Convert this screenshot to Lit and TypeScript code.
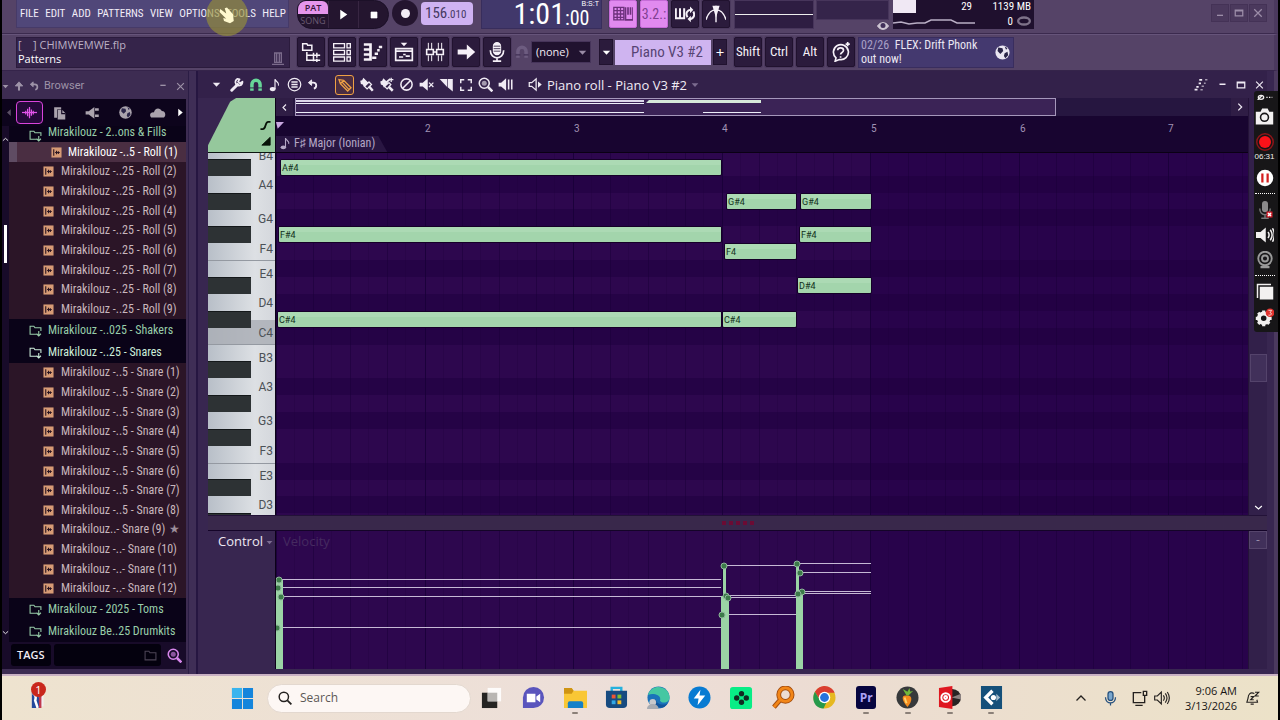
import { LitElement, html, svg, css } from "lit";
import { customElement } from "lit/decorators.js";

const ico = (body: unknown, w = 24, h = w, vw = 24, vh = vw, cls = "") =>
  html`<svg class=${cls} width=${w} height=${h} viewBox="0 0 ${vw} ${vh}" fill="none" stroke="currentColor" stroke-width="2" aria-hidden="true">${body}</svg>`;

const I = {
  tri: svg`<path d="M2 7h20L12 18z" fill="currentColor" stroke="none"/>`,
  play: svg`<path d="M6 3l13 9-13 9z" fill="currentColor" stroke="none"/>`,
  left: svg`<path d="M16 4L8 12l8 8" stroke-width="3"/>`,
  right: svg`<path d="M8 4l8 8-8 8" stroke-width="3"/>`,
  down: svg`<path d="M3 8l9 8 9-8" stroke-width="3"/>`,
  up: svg`<path d="M3 16l9-8 9 8" stroke-width="3"/>`,
  min: svg`<path d="M4 10h16" stroke-width="4"/>`,
  max: svg`<path d="M3 5h18v14H3zM3 7h18" stroke-width="3"/>`,
  close: svg`<path d="M3 3l18 18M21 3L3 21" stroke-width="3"/>`,
  undo: svg`<path d="M10 2L3 8l7 6V2z" fill="currentColor"/><path d="M8 8h6c8 0 8 11 1 13" stroke-width="4"/>`,
  arrowUp: svg`<path d="M12 23V6" stroke-width="5"/><path d="M3 12L12 2l9 10z" fill="currentColor"/>`,
  wrench: svg`<path d="M3 21L13 11" stroke-width="5" stroke-linecap="round"/><path d="M21 5a6 6 0 1 1-6-4M22 6l-5 3-3-3 3-5" stroke-width="3"/>`,
  magnet: svg`<path d="M5 22V11a7 7 0 0 1 14 0v11" stroke-width="6"/><path d="M1 17h8M15 17h8" stroke="#2e1d42" stroke-width="1.5"/>`,
  note: svg`<path d="M12 19V2c1 5 8 5 6 11" /><ellipse cx="8" cy="19" rx="5" ry="3.5" fill="currentColor" stroke="none"/>`,
  lines: svg`<circle cx="12" cy="12" r="10"/><path d="M7 8h10M7 12h10M7 16h10" stroke-width="2.3"/>`,
  pencil: svg`<path d="M3 4l7 1 11 11-5 5L5 10zM10 5L5 10M8 8l10 11"/>`,
  brush: svg`<path d="M2 6l3-1 2-4 8 8-7 7-2-4-3-1z" fill="currentColor" stroke="none"/><path d="M16 8l4 4-7 7-4-4z"/><path d="M16 15l6 7" stroke-width="4"/>`,
  brushPlus: svg`<path d="M2 7l3-1 2-4 8 8-7 7-2-4-3-1z" fill="currentColor" stroke="none"/><path d="M16 9l3 3-6 7-4-4z"/><path d="M16 16l6 6" stroke-width="4"/><path d="M10 10l8-7" stroke-width="3"/><path d="M16 4h7M19.500 1v7"/>`,
  no: svg`<circle cx="12" cy="12" r="9" stroke-width="2.5"/><path d="M6 18L18 6" stroke-width="2.5"/>`,
  mute: svg`<path d="M1 9h5l8-7v20l-8-7H1z" fill="currentColor" stroke="none"/><path d="M16 9l7 7M23 9l-7 7"/>`,
  slice: svg`<path d="M1 3h12v13z" fill="currentColor" stroke="none"/><path d="M15 4h6v17l-6-5z" fill="currentColor"/>`,
  select: svg`<path d="M9 3H3v6M15 3h6v6M3 15v6h6M21 15v6h-6" stroke-width="2.5"/>`,
  zoom: svg`<circle cx="10" cy="10" r="8" stroke-width="2.5"/><circle cx="10" cy="10" r="4" fill="currentColor" opacity=".6" stroke="none"/><path d="M16 16l7 7" stroke-width="4"/>`,
  playback: svg`<path d="M1 9h4l8-7v20l-8-7H1z" fill="currentColor" stroke="none"/><path d="M17 4v16M22 4v16" stroke-width="2.5"/>`,
  speaker: svg`<path d="M2 9h4l7-6v18l-7-6H2z"/><path d="M16 7l6 5-6 5z" fill="currentColor" stroke="none"/>`,
  wave: svg`<path d="M0 12h24" stroke-width="2"/><path d="M6 9v6M9 6v12M12 3v18M15 7v10M18 9v6" stroke-width="2"/>`,
  pages: svg`<path d="M2 2h12v4H7v14H2z" fill="currentColor" stroke="none"/><path d="M8 7h8l5 5v11H8z" fill="currentColor" stroke="none"/><path d="M15 7v6h6" stroke="#120822"/>`,
  plug: svg`<path d="M1 10h5l9-7v19l-9-7H1zM16 5h6v4h-6zM16 15h6v4h-6z" fill="currentColor" stroke="none"/>`,
  globe: svg`<circle cx="12" cy="12" r="10" fill="currentColor" stroke="none"/><path d="M6 5l6 1 1 4-4 4-4-4zM15 13l4-2 1 5-4 4-2-3zM15 3l4 3-2 2z" fill="#2a2548" stroke="none"/>`,
  cloud: svg`<path d="M3 19c-4-5 1-8 4-7 1-7 9-7 11-2 6 0 6 7 3 9z" fill="currentColor" stroke="none"/>`,
  folder: svg`<path d="M14 19H2V4h7l2 3h11v6M18 13v9M14 18l4 4 4-4" stroke-width="2"/>`,
  folder2: svg`<path d="M2 4h7l2 3h11v13H2z"/>`,
  browser: svg`<path d="M2 2h5l1 2h5v6H2zM7 12v10h8M7 16h8M15 13v6M19 13v6M15 16h8M15 19v4M19 20v4M15 22h8" stroke-width="1.8"/>`,
  rack: svg`<path d="M2 2h13v5H2zM2 10h13v5H2zM2 18h13v5H2zM18 2h4v5h-4zM18 10h4v5h-4zM18 18h4v5h-4z" stroke-width="1.6"/>`,
  roll: svg`<path d="M1 3h8v18H1M1 9h8M1 15h8" stroke-width="3.2"/><path d="M11 19h5M14 14h4M17 10h3M19 6h4" stroke-width="3"/>`,
  playlist: svg`<path d="M2 8h20v14H2z M2 11h20"/><path d="M6 18h5M11 15h3M14 17h5" stroke-width="2"/><path d="M8 1h8l-4 4z" fill="currentColor" stroke="none"/>`,
  mixer: svg`<path d="M4 1v8M8 1v8M16 1v8M20 1v8M4 16v7M8 16v7M16 16v7M20 16v7" stroke-width="1.2"/><path d="M2 9h8v6H2zM14 9h8v6h-8zM10 12h4" stroke-width="1.9"/>`,
  arrow: svg`<path d="M2 12h12" stroke-width="6"/><path d="M13 3l10 9-10 9z" fill="currentColor" stroke="none"/>`,
  mic: svg`<rect x="8" y="1" width="8" height="14" rx="4" fill="currentColor"/><path d="M8 5h8M8 8h8M8 11h8" stroke="#2b1b3c" stroke-width="1"/><path d="M4 10c0 12 16 12 16 0M12 18v5M7 23h10"/>`,
  help: svg`<path d="M6 19l-1 4 5-2a9 9 0 1 0-4-2zM8 10c0-4 7-4 7 0 0 3-3.500 2-3.500 5M11.500 17v2"/><path d="M20 0v5M17.500 2.500h5"/>`,
  typing: svg`<path d="M1 4h12v15H1zM1 8h12M1 12h12M1 16h12M5 4v15M9 4v15" stroke-width="1.6"/><path d="M15 4v15h9V4M18 4v9M21 4v9" stroke-width="2"/>`,
  loop: svg`<path d="M1 5v12h10V5M6 5v12" stroke-width="2.4"/><path d="M15 16c-3-5 0-9 4-9M17 18c6 0 7-5 5-9" stroke-width="2.4"/><path d="M18 3l4 4-4 4zM19 14l-4 4 4 4z" fill="currentColor" stroke="none"/>`,
  curve: svg`<path d="M0 19C3 9 8 7 12 7s9 2 12 12M12 2v20" stroke-width="1.700"/><path d="M9 3h6l-3 10z" fill="currentColor"/>`,
  sample: svg`<rect x="1" y="1" width="22" height="22" fill="#d79b75" stroke="none"/><path d="M6 5v14M9 12h10M12 8v8M16 9v6" stroke="#2a1420" stroke-width="2.400"/>`,
  hat: svg`<path d="M7 3h10v14H7zM3 20h18M10 4v13M14 4v13"/>`,
  eye: svg`<path d="M1 12c5-9 17-9 22 0-5 9-17 9-22 0z" fill="currentColor"/><circle cx="12" cy="11" r="5" fill="#41305a" stroke="none"/>`,
  ghost: svg`<path d="M1 20h5M4 15h4M8 9h4M9 3h5" stroke-width="3"/><path d="M11 20h4M13 14h4M17 9h3M19 3h4" stroke-width="2.5" opacity=".6"/>`,
};

const T = {
  widgets: svg`<path d="M7 7h14v15H7z" fill="#f2eef0" stroke="none"/><path d="M7 4c3-1 6-1 7 3l2 6 2 11H7z" fill="#23499b" stroke="none"/><path d="M8 7c4 0 4 5 3 8l3 9" stroke="#fff" stroke-width="3"/><path d="M17 9v15" stroke="#c0374d" stroke-width="3"/>`,
  win: svg`<path d="M1 1h10.500v10.500H1zM12.500 1H23v10.500H12.500zM1 12.500h10.500V23H1zM12.500 12.500H23V23H12.500z" fill="#1485dc" stroke="none"/><path d="M1 1h10.500v10.500H1z" fill="#39b4ee" stroke="none"/>`,
  task: svg`<path d="M2 7h16v16H2z" fill="#252422" stroke="none"/><path d="M8 2h14v14H8z" fill="#fdfbfa" stroke="none"/><path d="M8 7h10v9H8z" fill="#b9b6b3" stroke="none"/>`,
  chat: svg`<path d="M1 23V12a11 11 0 1 1 11 11z" fill="#5a55bd" stroke="none"/><path d="M5 8h9v9H5zM15 11l4-3v9l-4-3z" fill="#fff" stroke="none"/>`,
  files: svg`<path d="M0 2h8l2 3h14v18H0z" fill="#f9c735" stroke="none"/><path d="M0 2h8l2 3-2 3H0z" fill="#cf9413" stroke="none"/><path d="M4 23v-5q0-2 2-2h12q2 0 2 2v5z" fill="#1380c8" stroke="none"/>`,
  store: svg`<path d="M7 6V2h10v4" stroke="#25b1dd" stroke-width="2.500"/><path d="M1 5h22v14q0 4-4 4H5q-4 0-4-4z" fill="#174b80" stroke="none"/><path d="M7 9h4v4H7z" fill="#ee5533" stroke="none"/><path d="M13 9h4v4h-4z" fill="#82bd31" stroke="none"/><path d="M7 15h4v4H7z" fill="#33a8e5" stroke="none"/><path d="M13 15h4v4h-4z" fill="#f8bb28" stroke="none"/>`,
  edge: svg`<circle cx="12" cy="12" r="11.500" fill="#1a73ba" stroke="none"/><path d="M1 9C5-3 22-1 23.500 11c1 7-8 8-10 4 2-5-6-8-12-6z" fill="#45c7a2" stroke="none"/><path d="M9 13c0 6 8 8 13 5l-4 4C10 25 6 18 9 13z" fill="#11549c" stroke="none"/><circle cx="6" cy="17" r="3.500" fill="#c7c8cc" stroke="none"/><path d="M0 24c0-7 12-7 12 0z" fill="#a8abb2" stroke="none"/>`,
  bolt: svg`<circle cx="12" cy="12" r="11.500" fill="#087bd2" stroke="none"/><path d="M13 4L6 13h5l-1 7 8-10h-6z" fill="#fff" stroke="none"/>`,
  green: svg`<rect x="0" y="1" width="23" height="23" rx="3" fill="#08ed86" stroke="none"/><g fill="#122b22" stroke="none"><circle cx="12" cy="8" r="2.800"/><circle cx="12" cy="17" r="2.800"/><circle cx="7" cy="12.500" r="2.800"/><circle cx="17" cy="12.500" r="2.800"/></g>`,
  magnifier: svg`<circle cx="14" cy="9" r="7" stroke="#a44e10" stroke-width="5"/><path d="M9 14l-7 8" stroke="#a44e10" stroke-width="5"/><circle cx="14" cy="9" r="7" stroke="#f28618" stroke-width="3"/><path d="M9 14l-7 8" stroke="#f28618" stroke-width="3"/>`,
  chrome: svg`<circle cx="12" cy="12" r="11.500" fill="#e6b820" stroke="none"/><path d="M2 6C8-4 20 0 22.500 7H12L7 14z" fill="#da3e31" stroke="none"/><path d="M2 6l6 10 6 1-3 6.500C1 23-2 13 2 6z" fill="#26994b" stroke="none"/><circle cx="12" cy="12" r="6" fill="#fff" stroke="none"/><circle cx="12" cy="12" r="4.600" fill="#2673dc" stroke="none"/>`,
  fl: svg`<circle cx="12" cy="12" r="11.500" fill="#37393b" stroke="none"/><path d="M12 22c-7-8-6-13-1-12 6-1 7 5 1 12z" fill="#f58a1c" stroke="none"/><path d="M11 10L7 3l5 3 2-4 1 4 3-1-5 5z" fill="#71b83a" stroke="none"/><path d="M9 12l2 6" stroke="#ffd26a"/>`,
  disc: svg`<circle cx="15" cy="12" r="9" fill="#282424" stroke="none"/><path d="M14 12l10-4v6z" fill="#8b8180" stroke="none"/><path d="M1 2l14-2v24L1 22z" fill="#df1720" stroke="none"/><circle cx="8" cy="12" r="4.500" stroke="#fff"/><circle cx="8" cy="12" r="1.500" stroke="#fff"/>`,
  cubase: svg`<path d="M1 0h22v24H1z" fill="#15507a" stroke="none"/><path d="M13 5l-7 7 7 7" stroke="#fff" stroke-width="3.500"/><circle cx="14" cy="12" r="2.700" fill="#fff" stroke="none"/><path d="M17 8l4 4-4 4z" fill="#fff" stroke="none" opacity=".6"/>`,
};

/* ---------- data ---------- */
type Row = { t: string; k: "folder" | "open" | "file"; sel?: boolean; star?: boolean };
const rows: Row[] = [
  { t: "Mirakilouz -..5 - Roll (1)", k: "file", sel: true },
  ...[2, 3, 4, 5, 6, 7, 8, 9].map((n): Row => ({ t: `Mirakilouz -..25 - Roll (${n})`, k: "file" })),
  { t: "Mirakilouz -..025 - Shakers", k: "folder" },
  { t: "Mirakilouz -..25 - Snares", k: "open" },
  ...[1, 2, 3, 4, 5, 6, 7, 8].map((n): Row => ({ t: `Mirakilouz -..5 - Snare (${n})`, k: "file" })),
  { t: "Mirakilouz..- Snare (9)", k: "file", star: true },
  ...[10, 11, 12].map((n): Row => ({ t: `Mirakilouz -..- Snare (${n})`, k: "file" })),
  { t: "Mirakilouz - 2025 - Toms", k: "folder" },
  { t: "Mirakilouz Be..25 Drumkits", k: "folder" },
];

// Note name, start x, width, top y, measured inside the note grid.
const notes: [string, number, number, number][] = [
  ["A#4", 5, 440, 7], ["F#4", 3, 442, 74], ["C#4", 2, 443, 159],
  ["G#4", 451, 69, 41], ["F4", 449, 71, 91], ["C#4", 447, 73, 159],
  ["G#4", 525, 70, 41], ["F#4", 524, 71, 74], ["D#4", 522, 73, 125],
];

const SEMI = 17 - 0.13;
const NAMES = ["B", "A#", "A", "G#", "G", "F#", "F", "E", "D#", "D", "C#", "C"];
const OUT_OF_SCALE = ["A", "G", "E", "D", "C"];
const BEAT = 148.6 / 4;
const keyLabels: [string, number][] = [
  ["B4", 7], ["A4", 36], ["G4", 70], ["F4", 100], ["E4", 125], ["D4", 154], ["C4", 184],
  ["B3", 209], ["A3", 238], ["G3", 272], ["F3", 302], ["E3", 327], ["D3", 356],
];

const verticals = (h: number) => Array.from({ length: 27 }, (_, i) => {
  const x = Math.round(i * BEAT);
  return svg`<rect x=${x} y="0" width="1" height=${h} fill="#190038" opacity=${i % 4 ? 0.45 : 0.85}/>
    <rect x=${x + 18} y="0" width="1" height=${h} fill="#190038" opacity=".18"/>`;
});

const stems: { bar: [number, number, number]; end: number; pts: [number, number][] }[] = [
  { bar: [0, 7, 49], end: 445, pts: [[3, 49], [2, 57], [5, 66], [1, 97]] },
  { bar: [445, 8, 65], end: 520, pts: [[448, 35], [450, 65], [452, 67], [446, 84]] },
  { bar: [520, 7, 61], end: 595, pts: [[521, 33], [524, 42], [526, 61], [522, 63]] },
];

@customElement("app-root")
export class AppRoot extends LitElement {
  static styles = css`
    :host { display: flex; flex-direction: column; height: 100vh; box-sizing: border-box; overflow: hidden; position: relative;
      border-inline: 2px solid #000; background: #554367; color: #eee8f2;
      --narrow: "Roboto Condensed", "Roboto", sans-serif; --ui: "Open Sans", "Noto Sans", sans-serif;
      font: 12px/16px var(--ui); }
    *, *::before { box-sizing: border-box; }
    svg { display: block; flex: none; }
    button, input, select { font: inherit; color: inherit; margin: 0; padding: 0; border: 0; background: none; border-radius: 0; }
    button { display: flex; align-items: center; justify-content: center; }
    .bar { display: flex; flex: none; align-items: flex-start; padding-left: 14px; border-right: 4px solid #4b395e; white-space: nowrap; }
    .top { height: 34px; border-bottom: 1px solid #3b2a4e; }
    .second { height: 37px; align-items: center; border-top: 1px solid #66547a; border-bottom: 1px solid #35244a; padding-bottom: 1px; }
    .menu { width: 273px; height: 28px; background: #504779; border: 1px solid #463a68; border-top: 0; display: flex; justify-content: space-between; align-items: center; padding: 0 2px 0 3px;
      font: 11px/20px var(--narrow); color: #f3eef8; }
    .transport { display: flex; margin-left: 8px; width: 92px; height: 29px; border-radius: 10px 16px 16px 16px; background: #24152f; overflow: hidden; border: 1px solid #1c1028; }
    .transport button { flex: 1; border-left: 1px solid #382642; color: #fff; }
    .modes { width: 30px; text-align: center; font: 9px/13px var(--ui); }
    .pat { background: #e696ec; color: #38163d; border-radius: 6px 6px 0 0; font-weight: 600; }
    .song { color: #695a72; }
    .rec { width: 26px; height: 26px; border-radius: 50%; background: #24152f; margin-left: 3px; }
    .rec i { width: 9px; height: 9px; border-radius: 50%; background: #f3edf6; }
    .tempo { margin: 2px 0 0 3px; width: 52px; height: 23px; border-radius: 4px; background: #cfb2f2; color: #463963; font: 15px/23px var(--narrow); padding-left: 4px; }
    .tempo small { font-size: 11px; }
    .time { margin-left: 8px; width: 121px; height: 29px; background: #41386b; border: 1px solid #382d5c; border-top: 0; display: flex; justify-content: flex-end; align-items: flex-start; padding-right: 2px; color: #fff; font: 30px/28px var(--narrow); }
    .frac { width: 34px; display: flex; flex-direction: column; align-items: flex-start; font-size: 20px; line-height: 20px; }
    .frac .bst { align-self: flex-end; font: 7px/8px "Liberation Sans", sans-serif; }
    .sq { width: 28px; height: 30px; background: #2b1b3c; border: 1px solid #21122f; border-radius: 2px; box-shadow: 0 0 0 1px #4b395e; color: #f6f1f8; flex: none; }
    .group { display: flex; gap: 3px; margin-left: 7px; }
    .top .sq { height: 28px; }
    .hot { background: #e18aef; color: #6d307c; border-color: #c56bd7; }
    .top .lcd { font: 14px/24px var(--narrow); color: #7f4091; }
    .scope { width: 80px; height: 29px; margin-left: 4px; background: #2e1d42; border: 1px solid #47355b; padding-top: 13px; }
    .scope hr { border: 0; margin: 0; height: 1px; background: #eee; }
    .peak { width: 73px; margin-left: 2px; display: flex; flex-direction: column; align-items: flex-end; color: #cfc7d4; }
    .peak div { width: 100%; height: 20px; background: #35244a; border: 1px solid #47355b; }
    .cpu { width: 141px; height: 29px; margin-left: 4px; background: #1f102e; display: grid; grid-template: 13px 16px / 82px 1fr; font: 11px/13px var(--narrow); color: #fff; text-align: right; padding-right: 3px; }
    .cpu .meter { background: linear-gradient(90deg, #f0e8f4 23px, transparent 0); padding-right: 3px; }
    .cpu .mem { display: flex; justify-content: flex-end; align-items: center; gap: 4px; }
    .winbtns { display: flex; gap: 1px; margin: 4px 7px 0 auto; color: #9c8da8; }
    .winbtns button { width: 18px; height: 18px; background: #4b395d; border: 1px solid #443256; }
    .hint { width: 274px; height: 31px; background: #35244a; border: 1px solid #2b1b3d; display: flex; justify-content: space-between; align-items: flex-end; padding: 0 3px 0 1px; font-size: 11px; line-height: 14px; color: #bbb0c4; }
    .hint p { margin: 0; align-self: center; white-space: pre; }
    .hint svg { color: #7b6b8b; }
    .hint b { font-weight: 400; color: #fff; }
    .snap { display: flex; align-items: center; margin-left: 4px; color: #6d5c80; gap: 2px; }
    .pick { display: flex; align-items: center; color: #998ba5; background: #20122f; padding-right: 3px; border: 1px solid #46345a; }
    select { appearance: none; width: 46px; height: 20px; padding-left: 4px; color: #f0eaf3; font: 11px/20px var(--ui); }
    .thin { width: 14px; height: 26px; background: #2b1b3c; color: #fff; border: 1px solid #21122f; margin-left: 8px; font-size: 15px; }
    .plus { margin-left: 2px; }
    .channel { width: 96px; height: 25px; margin-left: 2px; background: #cfb4f0; color: #574474; font: 15px/24px var(--narrow); justify-content: flex-end; padding-right: 8px; }
    .keysq { font: 13px/20px var(--narrow); }
    .news { width: 156px; height: 31px; margin-left: 3px; background: #44396f; border: 1px solid #392d5e; display: flex; align-items: center; justify-content: space-between; font: 12px/14px var(--narrow); padding: 0 2px; color: #eae6f2; }
    .news p { margin: 0; } .news time { color: #a9a0c6; }
    .work { flex: 1; min-height: 0; display: flex; border-right: 4px solid #4b395e; background: #3f2e56; }
    .browser { width: 187px; flex: none; display: flex; flex-direction: column; padding: 5px 2px 5px 0; background: #3d2c52; border-right: 1px solid #2b1d45; }
    .bhead { height: 20px; display: flex; align-items: center; gap: 5px; color: #9e93a8; font: 11px/16px "Roboto", sans-serif; }
    .bhead span { margin-right: auto; }
    .bhead svg:last-child { margin: 0 1px 0 4px; }
    .tabs { height: 27px; margin-top: 3px; background: #0d041c; display: grid; grid-template-columns: 12px 30px repeat(4, 1fr) 12px; align-items: center; justify-items: center; color: #aaa3ad; }
    .tabs .on { width: 27px; height: 23px; border: 1px solid #d944dc; border-radius: 4px; background: #25093a; color: #e255ea; }
    .lib { flex: 1; min-height: 0; display: flex; background: #180b29; }
    .rail { width: 7px; display: flex; flex-direction: column; justify-content: space-between; padding: 10px 0 6px; color: #fff; }
    .rail i { width: 3px; height: 38px; background: #fff; margin: 82px 0 auto 2px; }
    .tree { flex: 1; min-width: 0; margin: 0; padding: 0; list-style: none; display: flex; flex-direction: column; font: 12px/19px var(--narrow); }
    .tree li { display: flex; align-items: center; gap: 7px; padding: 1px 1px 0 34px; white-space: nowrap; overflow: hidden; }
    .file { flex: 1 1 0; min-height: 0; background: #2b1527; color: #c9b7bd; }
    .folder, .open { flex: 0 0 22px; min-height: 0; background: #0a0318; }
    .tree .folder, .tree .open { padding-left: 20px; color: #98cda9; gap: 6px; }
    .tree .open { color: #cdeeda; }
    .tree .first { flex-basis: 16px; align-items: flex-end; line-height: 19px; }
    .tree .sel { background: #4a2e42; color: #fff; padding-left: 42px; gap: 6px; box-shadow: inset 8px 0 #5f4c63; }
    .star { color: #9d8e9b; margin-left: -3px; }
    .tags { display: flex; align-items: center; height: 27px; background: #180b29; gap: 3px; padding: 2px 4px 3px 9px; color: #d887ec; }
    .tags b, .tags label { background: #04010e; height: 22px; border-radius: 3px; display: flex; align-items: center; }
    .tags b { font: 600 11px/22px var(--ui); color: #f0ebf2; padding: 0 6px; }
    .tags label { flex: 1; padding-right: 4px; color: #4c4455; min-width: 0; margin-right: 3px; }
    .tags input { width: 0; flex: 1; height: 20px; }
    .roll { flex: 1; min-width: 0; margin-left: 7px; border-left: 2px solid #261641; padding: 0 7px 5px 10px; display: flex; flex-direction: column; background: #382650; }
    .title { height: 27px; flex: none; margin-left: -10px; padding-left: 14px; background: #33214a; display: flex; align-items: center; gap: 5px; color: #f0ebf4; font: 13px/20px var(--ui); }
    .title .on { border: 1px solid #efa044; border-radius: 3px; width: 19px; height: 20px; color: #efa044; background: #4b2d42; margin-left: 12px; }
    .title .wr { margin-left: 4px; }
    .title .green { color: #67d698; }
    .title span { margin-left: 10px; display: flex; align-items: center; gap: 4px; white-space: nowrap; }
    .title .ends { margin-left: auto; margin-right: 3px; display: flex; gap: 9px; }
    .area { flex: 1; min-height: 0; display: grid; grid-template: 18px 37px minmax(0, 1fr) 16px 138px / 67px minmax(0, 1fr) 19px; }
    .corner { grid-row: 1 / 3; background: #95c89c; clip-path: polygon(42% 0, 100% 0, 100% 100%, 0 100%, 0 86%, 33% 7%); color: #081308; display: flex; flex-direction: column; align-items: flex-end; justify-content: flex-end; padding: 0 4px 6px; gap: 5px; border-bottom: 1px solid #0c1510; }
    .mini { display: flex; align-items: stretch; background: #261640; border-left: 1px solid #0c0218; }
    .mini button { width: 17px; background: #2f1d45; }
    .mini .view { margin-left: 2px; flex: 0 1 761px; background: #3b2356; border: 1px solid #a597bb; min-width: 0; }
    .mini .next { margin-left: auto; }
    .side { background: #32204a; border-left: 1px solid #241338; }
    .ruler { border-left: 1px solid #0c0218; border-bottom: 1px solid #0a0014; background: #180530; overflow: hidden; display: flex; flex-direction: column; justify-content: space-between; }
    .bars { display: flex; font: 10px/14px "Roboto", sans-serif; color: #a193b5; padding-top: 6px; align-items: flex-end; }
    .bars span { flex: 0 0 148px; margin-right: 1px; }
    .bars svg { margin-bottom: 6px; }
    .bars span:nth-child(3n) { margin-right: 0; }
    .scale { align-self: flex-start; display: flex; align-items: center; gap: 2px; height: 16px; padding: 0 12px 2px 3px; background: #291642; color: #b5a8c6; font: 12px/14px var(--narrow); clip-path: polygon(0 0, 92% 0, 100% 100%, 0 100%); }
    .keys, .gridwrap, .lane { overflow: hidden; min-height: 0; }
    .gridwrap, .lane { border-left: 1px solid #0c0218; background: #250246; }
    .keys { background: linear-gradient(90deg, #b8bfc8, #dde0e4 70%, #d4d7dc); }
    .gridwrap svg, .lane svg, .keys svg { width: 100%; }
    .klabel { font: 12px "Roboto", sans-serif; fill: #4c5157; stroke: none; }
    .nlabel { font: 9px "Roboto", sans-serif; fill: #12301b; stroke: none; }
    .vel { font: 13px var(--ui); fill: #452a60; stroke: none; }
    .vscroll { display: flex; flex-direction: column; justify-content: flex-end; align-items: center; padding-bottom: 3px; color: #fff; }
    .vscroll i { width: 17px; height: 28px; background: #41305a; border: 1px solid #54436b; margin-bottom: 121px; }
    .split { grid-column: 1 / 4; background: #39284b; border-top: 1px solid #231238; border-bottom: 1px solid #140428; display: flex; justify-content: center; align-items: center; gap: 3px; }
    .split i { width: 4px; height: 4px; background: #6b0b34; }
    .ctl { display: flex; align-items: flex-start; justify-content: flex-end; gap: 3px; padding: 1px 2px; font: 13px/18px var(--ui); }
    .ctl svg { margin-top: 7px; color: #7c6c90; }
    .toggle { width: 18px; height: 18px; background: #41305a; border: 1px solid #56456c; color: #9c8fab; }
    .taskbar { flex: none; height: 46px; background: linear-gradient(90deg, #eee3cf, #eddfd9 45%, #ecdcd3 62%, #ece2c8); border-top: 2px solid #c9b1c3; display: flex; align-items: center; color: #24211f; }
    .widget { position: relative; padding-left: 24px; width: 229px; }
    .badge { position: absolute; left: 29px; top: -6px; width: 15px; height: 15px; border-radius: 50%; background: #c9271c; color: #fff; font: 11px/15px var(--ui); text-align: center; }
    .find { width: 204px; height: 29px; border-radius: 15px; background: #fdf7f4; border: 1px solid #e3d8cf; display: flex; align-items: center; gap: 8px; padding-left: 10px; margin-left: 13px; }
    .find input { width: 150px; font: 12px/20px var(--ui); } .find input::placeholder { color: #5c5856; opacity: 1; }
    .apps { display: grid; grid-template-columns: repeat(13, 1fr); width: 541px; }
    .apps button { height: 42px; flex-direction: column; gap: 3px; padding-top: 4px; }
    .apps button::after { content: ""; width: 6px; height: 2px; border-radius: 1px; background: transparent; }
    .apps .run::after { background: #8b8078; }
    .pr { width: 20px; height: 23px; border-radius: 3px; background: #06053f; color: #aaa2f5; font: 700 12px/23px var(--ui); }
    .tray { display: flex; margin-left: auto; margin-right: 18px; align-items: center; gap: 6px; }
    .caret { margin-right: 10px; }
    .tmic { margin-right: 8px; }
    .clock { text-align: right; font: 11px/15px var(--ui); margin: 0 2px 0 9px; color: #171514; }
    .recorder { position: absolute; right: 0; top: 91px; width: 24px; padding: 3px 3px 5px 0; background: #171618; border-radius: 3px 0 0 3px; display: flex; flex-direction: column; align-items: center; color: #f2f0f0; font: 8px/11px "Liberation Sans", sans-serif; }
    .recorder hr { width: 20px; margin: 6px 0 7px; border: 0; border-top: 1px dotted #fff; }
    .recorder svg + svg, .recorder .pause { margin-top: 7px; }
    .spot { position: absolute; left: 204px; top: -6px; width: 42px; height: 42px; border-radius: 50%; background: rgba(150, 145, 55, .65); display: grid; place-items: center; }
  `;

  private sq(i: unknown, label: string, cls = "") {
    return html`<button class="sq ${cls}" aria-label=${label}>${ico(i, 20)}</button>`;
  }

  private topBar() {
    return html`<header class="bar top">
      <nav class="menu">${["FILE", "EDIT", "ADD", "PATTERNS", "VIEW", "OPTIONS", "TOOLS", "HELP"].map((m) => html`<span>${m}</span>`)}</nav>
      <div class="transport"><div class="modes"><div class="pat">PAT</div><div class="song">SONG</div></div>
        <button aria-label="Play">${ico(I.play, 13)}</button><button aria-label="Stop">${ico(svg`<path d="M3 3h18v18H3z" fill="currentColor"/>`, 8)}</button></div>
      <button class="rec" aria-label="Record"><i></i></button>
      <div class="tempo">156<small>.010</small></div>
      <div class="time"><span>1:01</span><div class="frac"><span class="bst">B:S:T</span><span>:00</span></div></div>
      <div class="group">${this.sq(I.typing, "Typing keyboard", "hot")}<button class="sq hot lcd" aria-label="Countdown">3.2.:</button>${this.sq(I.loop, "Loop record")}${this.sq(I.curve, "Metronome")}</div>
      <div class="scope"><hr /></div>
      <div class="peak"><div></div>${ico(I.eye, 12)}</div>
      <div class="cpu"><span class="meter">29</span><span>1139 MB</span>
        ${ico(svg`<path d="M0 10l8-1 8 2 8-1h8l6-3h20l6 3h18" stroke-width="1.500" stroke="#b9aec5"/>`, 82, 16, 82, 16)}
        <span class="mem">0 ${ico(svg`<ellipse cx="12" cy="12" rx="10" ry="6" stroke="#7e7289" stroke-width="4"/>`, 14)}</span></div>
      <div class="winbtns"><button aria-label="Minimize">${ico(svg`<path d="M3 19h18" stroke-width="4"/>`, 8)}</button><button aria-label="Maximize">${ico(I.max, 10)}</button><button aria-label="Close">${ico(I.close, 10)}</button></div>
    </header>`;
  }

  private secondBar() {
    return html`<div class="bar second">
      <div class="hint"><p>[&nbsp;&nbsp;&nbsp;&nbsp;] CHIMWEMWE.flp<br /><b>Patterns</b></p>${ico(I.hat, 16)}</div>
      <div class="group">${this.sq(I.browser, "Browser")}${this.sq(I.rack, "Channel rack")}${this.sq(I.roll, "Piano roll")}${this.sq(I.playlist, "Playlist")}${this.sq(I.mixer, "Mixer")}${this.sq(I.arrow, "Step")}${this.sq(I.mic, "Microphone")}</div>
      <div class="snap">${ico(I.magnet, 14)}<div class="pick"><select aria-label="Snap"><option>(none)</option></select>${ico(I.tri, 9)}</div></div>
      <button class="thin" aria-label="Patterns">${ico(I.tri, 9)}</button><button class="channel">Piano V3 #2</button><button class="thin plus" aria-label="Add">+</button>
      <div class="group"><button class="sq keysq">Shift</button><button class="sq keysq">Ctrl</button><button class="sq keysq">Alt</button>${this.sq(I.help, "Help")}</div>
      <div class="news"><p><time>02/26</time>&nbsp; FLEX: Drift Phonk<br />out now!</p>${ico(I.globe, 17)}</div>
    </div>`;
  }

  private browser() {
    return html`<aside class="browser">
      <div class="bhead">${ico(I.tri, 7)}${ico(I.arrowUp, 10)}${ico(I.undo, 10)}<span>Browser</span>${ico(I.min, 8)}${ico(I.close, 9)}</div>
      <div class="tabs">${ico(svg`<path d="M18 3L8 12l10 9z" fill="#5b5065" stroke="none"/>`, 9)}<button class="on" aria-label="Sounds">${ico(I.wave, 15)}</button>${ico(I.pages, 14)}${ico(I.plug, 15)}${ico(I.globe, 15)}${ico(I.cloud, 17)}${ico(svg`<path d="M6 2l12 10L6 22z" fill="#fff" stroke="none"/>`, 9)}</div>
      <div class="lib"><div class="rail">${ico(I.up, 7)}<i></i>${ico(I.down, 7)}</div>
        <ul class="tree"><li class="folder first">${ico(I.folder, 13)}Mirakilouz - 2..ons &amp; Fills</li>
          ${rows.map((r) => html`<li class="${r.k} ${r.sel ? "sel" : ""}">${r.k === "file" ? ico(I.sample, 11) : ico(I.folder, 13)}<span>${r.t}</span>${r.star ? html`<span class="star">★</span>` : ""}</li>`)}
        </ul></div>
      <div class="tags"><b>TAGS</b><label><input aria-label="Search browser" />${ico(I.folder2, 13)}</label>${ico(I.zoom, 15)}</div>
    </aside>`;
  }

  private keyboard() {
    const H = 364;
    const rowsK = Array.from({ length: 23 }, (_, i) => ({ n: NAMES[i % 12], y: Math.round(-11 + i * SEMI) }));
    return html`<div class="keys"><svg height=${H}>
      <rect x="0" y="167" width="67" height="24" fill="#a9adb4" opacity=".8"/>
      ${[107, 191, 310].map((y) => svg`<rect x="0" y=${y} width="67" height="1" fill="#9499a1"/>`)}
      ${rowsK.filter((r) => r.n.endsWith("#")).map((r) => svg`<rect x="0" y=${r.y} width="43" height="17" fill="#2d3234"/><rect x="0" y=${r.y} width="43" height="1" fill="#14181a"/>`)}
      ${keyLabels.map(([t, y]) => svg`<text class="klabel" x="65" y=${y} text-anchor="end">${t}</text>`)}
    </svg></div>`;
  }

  private grid() {
    const H = 364;
    return html`<div class="gridwrap"><svg height=${H}>
      <rect width="594" height=${H} fill="#2d074e"/><rect x="594" width="100%" height=${H} fill="#28034b"/>
      ${Array.from({ length: 23 }, (_, i) => OUT_OF_SCALE.includes(NAMES[i % 12])
        ? svg`<rect x="0" y=${Math.round(-11 + i * SEMI)} width="100%" height="17" fill="#1f003f" opacity=".55"/>` : "")}
      ${verticals(H)}
      ${notes.map(([t, x, w, y]) => svg`<rect x=${x - 1} y=${y - 1} width=${w + 2} height="17" rx="2" fill="#150028"/>
        <rect x=${x} y=${y} width=${w} height="15" rx="1" fill="#a3d5ac"/><rect x=${x} y=${y} width=${w} height="5" rx="1" fill="#acdab4"/>
        <text class="nlabel" x=${x + 1} y=${y + 11}>${t}</text>`)}
    </svg></div>`;
  }

  private lane() {
    return html`<div class="lane"><svg height="138">
      <rect width="594" height="138" fill="#2d074e"/><rect x="594" width="100%" height="138" fill="#28034b"/>${verticals(138)}
      <text class="vel" x="7" y="15">Velocity</text>
      ${stems.map((s) => svg`${s.pts.map(([x, y]) => svg`<rect x=${x} y=${y - 1} width=${s.end - x} height="1" fill="#c6b9d5"/>`)}
        <rect x=${s.bar[0]} y=${s.bar[2]} width=${s.bar[1]} height="140" fill="#9bd3a5"/>
        <rect x=${s.pts[0][0] - 1} y=${s.pts[0][1]} width="3" height="60" fill="#9bd3a5"/>
        ${s.pts.map(([x, y]) => svg`<circle cx=${x} cy=${y} r="3" fill="#3c7a49" stroke="#8eb59a" stroke-width="1"/>`)}`)}
    </svg></div>`;
  }

  private roll() {
    const w = "#eef0fa";
    return html`<main class="roll">
      <div class="title">${ico(I.tri, 9)}${ico(I.wrench, 14, 14, 24, 24, "wr")}<b class="green">${ico(I.magnet, 14)}</b>${ico(I.note, 14)}${ico(I.lines, 15)}${ico(I.undo, 11)}
        <button class="on" aria-label="Draw">${ico(I.pencil, 16)}</button>${ico(I.brush, 15)}${ico(I.brushPlus, 15)}${ico(I.no, 15)}${ico(I.mute, 15)}${ico(I.slice, 15)}${ico(I.select, 14)}${ico(I.zoom, 15)}${ico(I.playback, 15)}
        <span>${ico(I.speaker, 15)} Piano roll - Piano V3 #2 ${ico(svg`<path d="M2 7h20L12 18z" fill="#7c6c90" stroke="none"/>`, 8)}</span>
        <div class="ends">${ico(I.ghost, 16, 14)}${ico(I.min, 9, 14)}${ico(I.max, 10, 14)}${ico(I.close, 9, 14)}</div></div>
      <div class="area">
        <div class="corner">${ico(svg`<path d="M1 20h5c8 0 4-16 12-16h5" stroke-width="4"/>`, 11)}${ico(svg`<path d="M2 22L22 3v19z" fill="currentColor"/>`, 10)}</div>
        <div class="mini"><button aria-label="Scroll left">${ico(I.left, 9)}</button>
          <div class="view"><svg width="466" height="16">
            <rect y="1" width="348" height="2" fill="#ddd8ea"/><rect y="4" width="348" height="1" fill=${w}/><rect y="13" width="348" height="1" fill=${w}/>
            <path d="M350 4l3-3h54v3zM407 1h58v3h-58z" fill="#d7ead9"/><rect x="407" y="13" width="58" height="1" fill=${w}/></svg></div>
          <button class="next" aria-label="Scroll right">${ico(I.right, 10)}</button></div>
        <div class="side"></div>
        <div class="ruler"><div class="bars"><span>${ico(svg`<path d="M0 0h24L5 20z" fill="#c9a8e0" stroke="none"/>`, 8)}</span>${[2, 3, 4, 5, 6, 7].map((n) => html`<span>${n}</span>`)}</div>
          <div class="scale">${ico(I.note, 13)}F♯ Major (Ionian)</div></div>
        <div class="side"></div>
        ${this.keyboard()}${this.grid()}
        <div class="side vscroll"><i></i>${ico(I.down, 9)}</div>
        <div class="split">${[1, 2, 3, 4, 5].map(() => html`<i></i>`)}</div>
        <div class="ctl">Control ${ico(I.tri, 7)}</div>${this.lane()}<div class="side"><button class="toggle">-</button></div>
      </div>
    </main>`;
  }

  private recorder() {
    return html`<div class="recorder">
      ${ico(svg`<ellipse cx="7" cy="5" rx="4" ry="3"/><path d="M2 9l7-7M15 5h2M19 5h2M23 5h1" stroke-width="2"/>`, 20, 6, 26, 9)}
      ${ico(svg`<path d="M1 6h6l2-4h7l2 4h5v16H1z" fill="currentColor" stroke="none"/><circle cx="12" cy="13" r="5" stroke="#171618"/>`, 19)}
      ${ico(svg`<circle cx="12" cy="12" r="11" stroke="#8e1519"/><circle cx="12" cy="12" r="8" fill="#fb1219" stroke="none"/>`, 18)}
      06:31
      <svg class="pause" width="18" height="18" viewBox="0 0 24 24"><circle cx="12" cy="12" r="11" fill="#fff"/><path d="M7 6h3v12H7zM14 6h3v12h-3z" fill="#d32020"/></svg>
      <hr />
      ${ico(svg`<rect x="8" y="0" width="8" height="15" rx="4" fill="#8b8a8b" stroke="none"/><path d="M5 10c0 11 14 11 14 0M12 18v5M7 23h10" stroke="#777"/><path d="M14 14h8v8h-8z" fill="#d6212d" stroke="none"/><path d="M16 16l4 4M20 16l-4 4" stroke="#fff"/>`, 18)}
      ${ico(svg`<path d="M0 8h6l7-6v20l-7-6H0z" fill="currentColor" stroke="none"/><path d="M16 8q3 4 0 8M19 5q5 7 0 14M22 3q5 9 0 18"/>`, 18)}
      ${ico(svg`<circle cx="12" cy="10" r="9" stroke="#999" stroke-width="2.500"/><circle cx="12" cy="10" r="4" stroke="#999" stroke-width="2.500"/><path d="M6 20h12v3H6z" fill="#999" stroke="none"/>`, 18)}
      <hr />
      ${ico(svg`<path d="M2 20V2h18" stroke-width="2"/><path d="M5 5h18v17H5z" fill="currentColor" stroke="none"/>`, 18)}
      ${ico(svg`<circle cx="11" cy="13" r="6" stroke-width="5"/><path d="M11 3v4M11 19v4M1 13h4M17 13h4M4 6l3 3M15 17l3 3M4 20l3-3" stroke-width="4"/><circle cx="19" cy="6" r="5.500" fill="#e2322e" stroke="none"/><path d="M17 3h4l-2 3c3 0 2 4-2 3" stroke-width="1"/>`, 19)}
    </div>`;
  }

  private taskbar() {
    const apps: [string, unknown, boolean][] = [
      ["Task view", T.task, false], ["Chat", T.chat, false], ["Files", T.files, true], ["Store", T.store, false], ["Edge", T.edge, false],
      ["Bolt", T.bolt, false], ["Controller", T.green, false], ["Finder", T.magnifier, false], ["Chrome", T.chrome, false],
      ["Pr", null, true], ["FL Studio", T.fl, true], ["Disc", T.disc, true], ["Cubase", T.cubase, true],
    ];
    return html`<footer class="taskbar">
      <div class="widget">${ico(T.widgets, 20)}<span class="badge">1</span></div>
      ${ico(T.win, 23)}
      <label class="find">${ico(svg`<circle cx="10" cy="10" r="8" stroke-width="2.500"/><path d="M16 16l7 7" stroke-width="3"/>`, 14)}<input placeholder="Search" aria-label="Search" /></label>
      <div class="apps">${apps.map(([n, i, r]) => html`<button class=${r ? "run" : ""} aria-label=${n}>${i ? ico(i, 23) : html`<span class="pr">Pr</span>`}</button>`)}</div>
      <div class="tray">${ico(svg`<path d="M3 17l9-9 9 9" stroke-width="2.500"/>`, 12, 12, 24, 24, "caret")}
        ${ico(svg`<rect x="8" y="1" width="8" height="14" rx="4" fill="#7aa7ce" stroke="#244f7d"/><path d="M4 10c0 12 16 12 16 0M12 18v5" stroke="#244f7d"/>`, 15, 15, 24, 24, "tmic")}
        ${ico(svg`<path d="M14 4H2v15h17v-7M5 23h11M17 2h5v6h-5zM19 8v6"/>`, 16)}
        ${ico(svg`<path d="M1 9h4l6-6v18l-6-6H1zM14 8q3 4 0 8M17 5q5 7 0 14M20 3q6 9 0 18" stroke-width="1.700"/>`, 16)}
        <div class="clock">9:06 AM<br />3/13/2026</div>
        ${ico(svg`<path d="M15 4C8 1 5 6 5 11l-2 7h17l-1-4M9 21h5M16 2h6l-6 6h6M9 9h5l-5 5h5" stroke-width="1.800"/>`, 15)}</div>
    </footer>`;
  }

  render() {
    return html`${this.topBar()}${this.secondBar()}
      <div class="work">${this.browser()}${this.roll()}</div>
      ${this.taskbar()}${this.recorder()}
      <div class="spot">${ico(svg`<path d="M3 4l8 6-2-7 3-1 8 9 1 9-5 3-8-3-1-4 4 1-9-9z" fill="#fff9ce" stroke="none"/>`, 18)}</div>`;
  }
}
